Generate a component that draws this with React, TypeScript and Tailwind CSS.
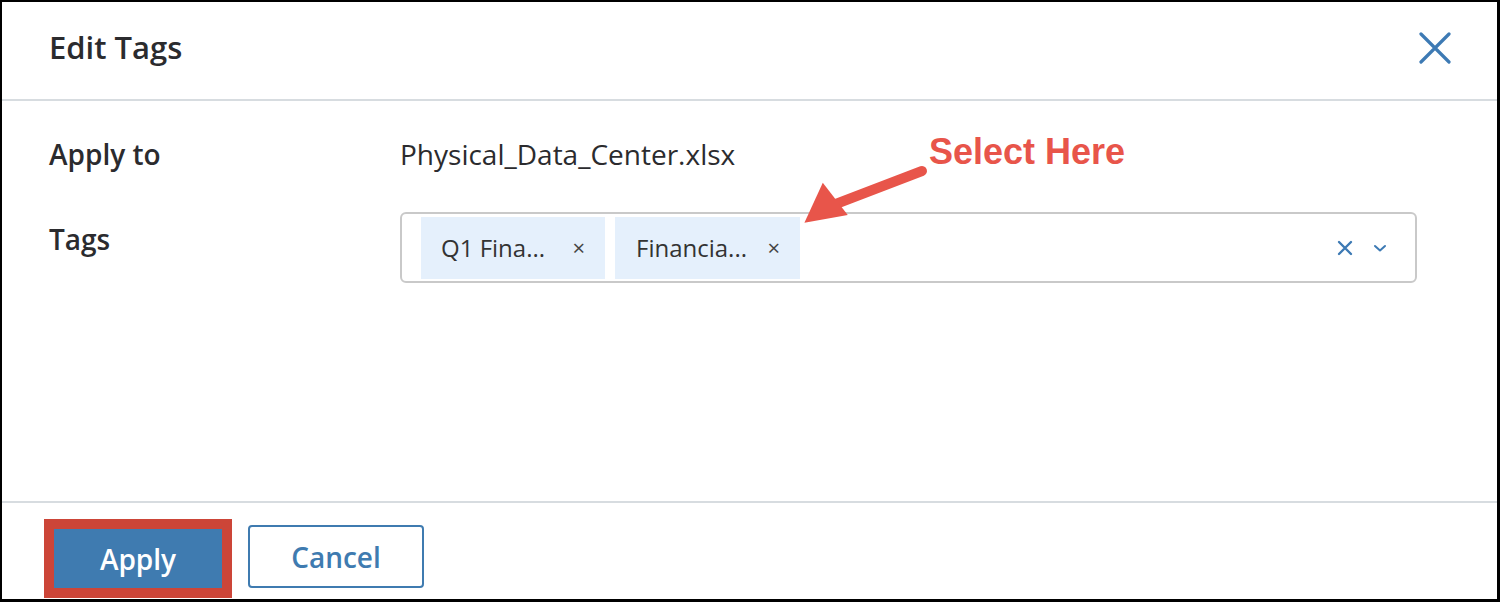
import React from "react";

const font = { fontFamily: '"Open Sans", "Noto Sans", sans-serif' };

export default function App() {
  return (
    <div
      className="relative w-[1500px] h-[602px] bg-white border-l-2 border-t-2 border-r-[3px] border-b-[3px] border-black flex flex-col text-[#2b2b2e]"
      style={font}
    >
      {/* Header */}
      <div className="h-[99px] flex items-center justify-between pl-[47px] pr-[46px] border-b-2 border-[#d7dce0] shrink-0">
        <div className="text-[31px] font-semibold -mt-[6px]">Edit Tags</div>
        <svg width="32" height="32" viewBox="0 0 32 32" className="-mt-[6px]">
          <path d="M2 2 L30 30 M30 2 L2 30" stroke="#3d7ab4" strokeWidth="3.2" strokeLinecap="round" />
        </svg>
      </div>

      {/* Body */}
      <div className="flex-1 pl-[47px] pr-[80px] pt-[33px]">
        <div className="flex items-center h-[40px]">
          <div className="w-[351px] text-[28px] font-semibold">Apply to</div>
          <div className="text-[28px]">Physical_Data_Center.xlsx</div>
        </div>
        <div className="flex items-start mt-[38px]">
          <div className="w-[351px] text-[28px] font-semibold pt-[6px]">Tags</div>
          <div className="flex-1 h-[71px] border-2 border-[#c9c9c9] rounded-[6px] flex items-center pl-[19px] pr-[28px]">
            <div className="flex gap-[10px] flex-1">
              <div className="h-[62px] w-[184px] bg-[#e5f0fc] flex items-center pl-[20px] pr-[20px] justify-between">
                <span className="text-[24px] text-[#333]">Q1 Fina...</span>
                <span className="text-[22px] text-[#444]">×</span>
              </div>
              <div className="h-[62px] w-[185px] bg-[#e5f0fc] flex items-center pl-[21px] pr-[20px] justify-between">
                <span className="text-[24px] text-[#333]">Financia...</span>
                <span className="text-[22px] text-[#444]">×</span>
              </div>
            </div>
            <div className="flex items-center gap-[20px]">
              <svg width="16" height="16" viewBox="0 0 16 16">
                <path d="M2 2 L14 14 M14 2 L2 14" stroke="#3d7ab4" strokeWidth="2.4" strokeLinecap="round" />
              </svg>
              <svg width="14" height="10" viewBox="0 0 14 10">
                <path d="M2 3 L7 7.5 L12 3" stroke="#3d7ab4" strokeWidth="2" fill="none" strokeLinecap="round" strokeLinejoin="round" />
              </svg>
            </div>
          </div>
        </div>
      </div>

      {/* Footer */}
      <div className="h-[98px] border-t-2 border-[#d7dce0] shrink-0 flex items-center pl-[42px] gap-[16px]">
        <div className="border-[10px] border-[#cc4538] mt-[15px]">
          <button className="w-[168px] h-[59px] bg-[#3f7bb0] text-white text-[28px] font-semibold flex items-center justify-center">
            Apply
          </button>
        </div>
        <button className="w-[176px] h-[63px] mt-[11px] border-2 border-[#3f7bb0] rounded-[4px] text-[#3f7bb0] text-[28px] font-semibold flex items-center justify-center bg-white">
          Cancel
        </button>
      </div>

      {/* Annotation */}
      <div
        className="absolute left-[927px] top-[132px] text-[36px] font-bold text-[#e8554a] leading-none"
        style={{ fontFamily: '"Liberation Sans", Arial, sans-serif' }}
      >
        Select Here
      </div>
      <svg className="absolute left-[796px] top-[155px]" width="135" height="70" viewBox="0 0 135 70">
        <path d="M124 14 L30 50" stroke="#e8554a" strokeWidth="10" strokeLinecap="round" />
        <path d="M4 62 L29 26 L48 62 Z" fill="#e8554a" transform="rotate(-10 26 50)" />
      </svg>
    </div>
  );
}
